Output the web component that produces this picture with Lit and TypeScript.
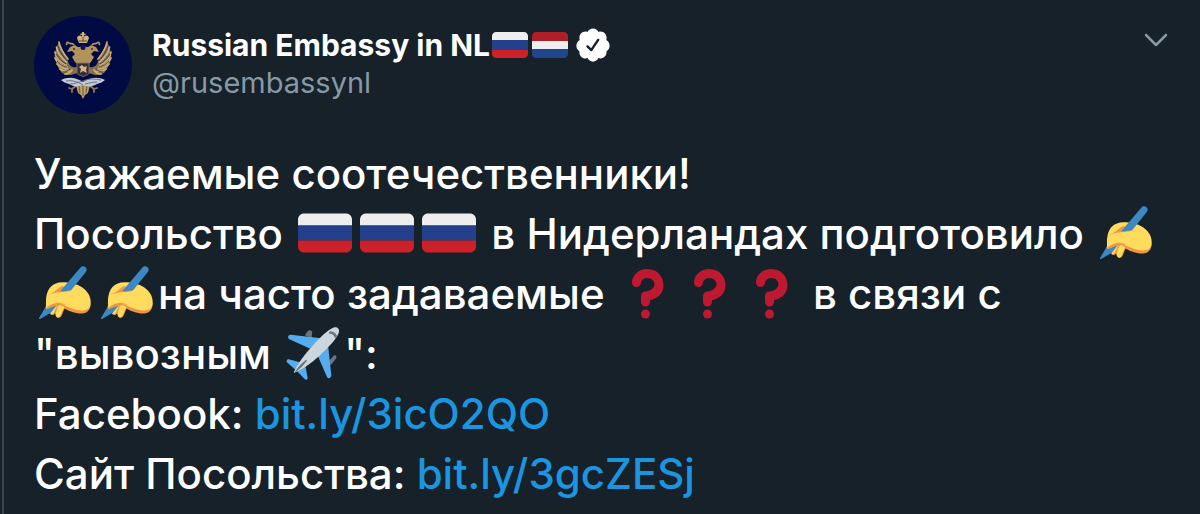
import { LitElement, html, svg, css } from "lit";
import { customElement, property } from "lit/decorators.js";

const shapes: Record<string, { label: string; art: unknown }> = {
  ru: {
    label: "Флаг России",
    art: svg`
      <path fill="#eee" d="M32 5H4C1.800 5 0 6.800 0 9v4h36V9c0-2.200-1.800-4-4-4z"/>
      <path fill="#22408c" d="M0 13h36v10H0z"/>
      <path fill="#ce2028" d="M0 23v4c0 2.200 1.800 4 4 4h28c2.200 0 4-1.800 4-4v-4z"/>`,
  },
  nl: {
    label: "Флаг Нидерландов",
    art: svg`
      <path fill="#ae1f28" d="M32 5H4C1.800 5 0 6.800 0 9v5h36V9c0-2.200-1.800-4-4-4z"/>
      <path fill="#eee" d="M0 14h36v8H0z"/>
      <path fill="#20478b" d="M0 22v5c0 2.200 1.800 4 4 4h28c2.200 0 4-1.800 4-4v-5z"/>`,
  },
  question: {
    label: "Вопрос",
    art: svg`
      <path fill="#be1931" d="M17 27c-1.657 0-3-1.343-3-3v-4c0-1.657 1.343-3 3-3 .603-.006 6-1 6-5 0-2-2-4-5-4-2.441 0-4 2-4 3 0 1.657-1.343 3-3 3s-3-1.343-3-3c0-4.878 4.580-9 10-9 8 0 11 5.982 11 11 0 4.145-2.277 7.313-6.413 8.920-.9.351-1.790.587-2.587.747V24c0 1.657-1.343 3-3 3z"/>
      <circle fill="#be1931" cx="17" cy="32" r="3"/>`,
  },
  writing: {
    label: "Пишущая рука",
    art: svg`
      <path fill="#ef9645" d="M16 27.500c5 3 10.500 4.800 14.500 4 3.200-.7 5-3.500 4.400-7L20 21z"/>
      <path fill="#ef9645" d="M7.500 26c-.5 4 .3 6.500 2 6.700.8 0 1.500-.4 1.900-1 .2 1.800 1 2.900 2.300 2.900 2.300 0 2.500-3.500 4.100-6.200l2-3.400-6-3z"/>
      <path fill="#ffdc5d" d="M8.200 27.500c-.4 2.600-.1 4.600 1 4.700 1.700.1 2-4 4.200-6.700l-2.500-1.500zM12.300 29.600c-.7 2.500-.4 4.500 1.100 4.700 2 .2 2.200-4 4.200-6.900l-3-1.600c-1.200 1-1.900 2.200-2.300 3.800z"/>
      <path fill="#3b88c3" d="M5.600 26.400.7 34.700c-.2.400.2.900.7.700l7.200-4.300 4.600-6z"/>
      <path fill="#ffdc5d" d="M5.300 23.700c.2-4.500 1.100-7.500 3.200-9.800 2.300-2.400 5.500-3.400 9.500-3 5 .3 9.500 1.600 13 4.600 3 2.600 4.400 6 4.100 9.500-.4 3.500-2.900 4.900-6.400 4.600-4.400-.3-7.800-1.800-11.200-3.400-1.600-.8-3.700-.9-5.500-.2l-5.400 2.400c-1.100.4-1.700-.4-1.300-1.600z"/>
      <path fill="#ef9645" d="M7.500 18.900c2.400-1 4.300-2.200 6.200-4l2.200-1.600 5 1.800 1.600 1.300c-5.400 1.900-10.200.1-15.800 3.100z"/>
      <path fill="#ef9645" d="M5.500 27.600c2.500-1.500 5-3 8-3.100 2 0 3.700.7 5 1.600-3.400-.9-6.300.1-9 1.300-1.800.8-3.400 1.300-4 .2z"/>
      <path fill="#3b88c3" d="M28.200 1.100c.9-1.100 2.300-1.300 3.300-.5 1.100.8 1.300 2.100.5 3.300l-9.600 12c-2 .7-4.700 1.100-7.600 1z"/>`,
  },
  plane: {
    label: "Самолёт",
    art: svg`
      <path fill="#66757f" d="m12.500 6.200 2-2.800c1-.9 2.500-.6 3 .6l-.5 4zM28.700 23.200l3.200-3.500c1.300-.8 2.200.5 1.500 2l-3.600 4.400z"/>
      <path fill="#55acee" d="M23.500 8.200 3.200 5.900C1.500 5.900.9 7.500 1.900 8.600L15.800 15zM28 12.500l2.200 20.200c0 2-1.700 2.800-2.800 1.500L20.800 19z"/>
      <path fill="#55acee" d="M9.800 24.400 1.900 22.200c-1.200-.2-2 1.200-1.100 2.200l6.800 6 4.800 5c1 1 2.200.4 2-1l-1.500-8z"/>
      <path fill="#ccd6dd" d="M5.300 30.500C8 25 12 19.500 17.200 13.700 22.500 7.700 28 2.600 31.500 1.200c2.600-1.100 4.700.8 3.600 3.700C33.500 8.800 28.500 14.200 22.500 19.600 16.800 24.700 11.300 28.800 5.300 31.300z"/>
      <path fill="#66757f" d="M5.500 31.200c2-3.400 4.700-6.300 7.700-8.600.6-.3 1 .1.600.7-2.200 3-5 5.800-8.300 7.900zM29.800 3.500c2 .1 3.700 1.400 4.200 3.200l-1.300 1.600c-.2-1.900-1.900-3.300-3.900-3.200-.5-.7.300-1.600 1-1.600z"/>`,
  },
};

@customElement("inline-emoji")
class InlineEmoji extends LitElement {
  static styles = css`
    :host {
      display: inline-block;
      width: 54px;
      height: 54px;
      margin: 0 4px;
      vertical-align: -11px;
      line-height: 0;
    }
    :host([small]) {
      width: 36px;
      height: 36px;
      margin: 0 2px;
    }
    .glyph {
      display: block;
      width: 100%;
      height: 100%;
      overflow: visible;
    }
  `;

  @property() name = "ru";

  render() {
    const shape = shapes[this.name];
    return html`<svg class="glyph" viewBox="0 0 36 36" role="img" aria-label=${shape.label}>${shape.art}</svg>`;
  }
}

@customElement("embassy-avatar")
class EmbassyAvatar extends LitElement {
  static styles = css`
    :host {
      display: block;
      flex: none;
      width: 98px;
      height: 98px;
    }
    .disc {
      display: block;
      width: 100%;
      height: 100%;
    }
  `;

  render() {
    const wing = svg`
      <path fill="#84704f" d="M44 51C38 52 35 50 34 45l-9-19c-3 6-5 12-4 17l2 6 2 4 3 4 4 2 5 0 6-2z"/>
      <g fill="none" stroke="#cdb07a" stroke-width="1.700" stroke-linecap="round">
        <path d="M25 26c1 7 5 12 9 17"/>
        <path d="M22.500 31c1 6 5 11 10 15"/>
        <path d="M21 36c1 6 5 10 11 13"/>
        <path d="M21 42c2 4 6 8 12 9"/>
        <path d="M23 48c3 3 6 5 11 5"/>
        <path d="M26 53c3 2 6 3 9 2"/>
        <path d="M31 58c3 0 5-1 7-4"/>
      </g>
      <path fill="none" stroke="#3e3440" stroke-width=".9" d="M24 30c2 7 6 11 9 15M22 38c3 5 6 8 10 10M23 45c3 4 6 5 10 6M29 56c3 0 5-1 7-3"/>
      <path fill="#b3935c" d="M47 51 41 46l-3-5 3-3-3-3-5 1 3-5 5-2 4 3 1 5z"/>
      <path fill="none" stroke="#b6975d" stroke-width="1.700" d="M40 29c-2-3-3 0-5-2s-3 1-2 2"/>
      <circle cx="40" cy="33" r=".9" fill="#29264a"/>
      <path fill="none" stroke="#8f7955" stroke-width="1.800" stroke-linecap="round" d="m43 69-5 4m0 0-3-1m3 1v3"/>`;
    return html`
      <svg class="disc" viewBox="0 0 98 98" role="img" aria-label="Russian Embassy in NL">
        <circle cx="49" cy="49" r="49" fill="#010a43"/>
        <g>${wing}</g>
        <g transform="matrix(-1 0 0 1 98 0)">${wing}</g>
        <path fill="#d0b17a" d="M43 22c1-3 4-3 5-1v-2h-1.500v-1.500H48V16h2v1.500h1.500V19H50v2c1-2 4-2 5 1l-2 5h-8z"/>
        <path stroke="#4f4239" stroke-width=".9" fill="none" d="M45 25h8M49 21v4"/>
        <path fill="#b3935c" d="M42 31h4l3-2 3 2h4l-3 7v9h-8v-9z"/>
        <circle cx="49" cy="31.500" r="2.500" fill="#141746"/>
        <path fill="#352b43" stroke="#8a734f" stroke-width="1" d="M43 47h12v10c0 2-4 2-6 4-2-2-6-2-6-4z"/>
        <path fill="#d4b57d" d="m46 57 1-4-2-2 3-2 2 2 3-1-1 4 1 3-2-1-2-1z"/>
        <path fill="#bd9e65" d="M42 69h14l-2 8-3 2-2 4-2-4-3-2z"/>
        <path stroke="#554839" stroke-width=".8" d="M45 70l1 7M49 70v10M53 70l-1 7"/>
        <path fill="#c3cad6" d="M27 64c8-4 16-2 22 2 6-4 14-6 22-2-2 2-5 3-8 4-5 3-9 3-14 1-5 2-9 2-14-1-3-1-6-2-8-4z"/>
        <path fill="none" stroke="#68738b" stroke-width="1" d="M32 65c7-1 12 1 17 4m-13-1c5 0 8-2 13-3 7-3 12-2 18-1m-16 4c5-1 8-2 12-2"/>
      </svg>`;
  }
}

@customElement("app-root")
class AppRoot extends LitElement {
  static styles = css`
    :host {
      display: block;
      min-height: 100vh;
      box-sizing: border-box;
      padding-left: 2px;
      background: #16212a;
      color: #fff;
      font-family: Inter, "Liberation Sans", sans-serif;
    }
    .tweet {
      box-sizing: border-box;
      min-height: 100vh;
      border-left: 2px solid #38444d;
      padding: 16px 32px 0 30px;
    }
    .header {
      display: flex;
      align-items: flex-start;
      gap: 20px;
    }
    .author {
      flex: 1;
      min-width: 0;
      padding-top: 10px;
      font-size: 29px;
      line-height: 38px;
    }
    .name-row {
      display: flex;
      align-items: center;
    }
    .name {
      font-size: 30px;
      font-weight: 700;
    }
    .badge {
      width: 38px;
      height: 38px;
      margin-left: 4px;
      fill: #fff;
    }
    .handle {
      color: #8899a6;
      text-decoration: none;
    }
    .more {
      display: block;
      margin-top: 14px;
      padding: 0;
      border: 0;
      background: none;
      color: #8899a6;
    }
    .chevron {
      display: block;
      width: 24px;
      height: 20px;
    }
    .body {
      margin: 30px 0 0;
      font-size: 42px;
      font-weight: 500;
      line-height: 60px;
    }
    .link {
      color: #1b95e0;
      text-decoration: none;
    }
  `;

  private emoji(name: string) {
    return html`<inline-emoji name=${name}></inline-emoji>`;
  }

  private triple(name: string) {
    return [0, 1, 2].map(() => this.emoji(name));
  }

  render() {
    return html`
      <article class="tweet">
        <header class="header">
          <embassy-avatar></embassy-avatar>
          <div class="author">
            <div class="name-row">
              <span class="name">Russian Embassy in NL</span>
              <inline-emoji small name="ru"></inline-emoji>
              <inline-emoji small name="nl"></inline-emoji>
              <svg class="badge" viewBox="0 0 24 24" role="img" aria-label="Verified account">
                <path d="M22.500 12.500c0-1.580-.875-2.950-2.148-3.600.154-.435.238-.905.238-1.400 0-2.210-1.710-3.998-3.818-3.998-.47 0-.92.084-1.336.25C14.818 2.415 13.510 1.500 12 1.500s-2.816.917-3.437 2.250c-.415-.165-.866-.25-1.336-.25-2.110 0-3.818 1.790-3.818 4 0 .494.083.964.237 1.400-1.272.65-2.147 2.018-2.147 3.600 0 1.495.782 2.798 1.942 3.486-.02.17-.032.34-.032.514 0 2.210 1.708 4 3.818 4 .47 0 .92-.086 1.335-.25.62 1.334 1.926 2.250 3.437 2.250 1.512 0 2.818-.916 3.437-2.250.415.163.865.248 1.336.248 2.110 0 3.818-1.790 3.818-4 0-.174-.012-.344-.033-.513 1.158-.687 1.943-1.990 1.943-3.484zm-6.616-3.334l-4.334 6.500c-.145.217-.382.334-.625.334-.143 0-.288-.04-.416-.126l-.115-.094-2.415-2.415c-.293-.293-.293-.768 0-1.060s.768-.294 1.060 0l1.770 1.767 3.825-5.740c.23-.345.696-.436 1.040-.207.346.23.44.696.21 1.040z"/>
              </svg>
            </div>
            <a class="handle" href="#rusembassynl">@rusembassynl</a>
          </div>
          <button class="more" type="button" aria-label="More">
            <svg class="chevron" viewBox="0 0 24 20" fill="none" stroke="currentColor" stroke-width="2.500" stroke-linecap="round" stroke-linejoin="round">
              <path d="m2 5 10 10 10-10"/>
            </svg>
          </button>
        </header>
        <p class="body">
          Уважаемые соотечественники!<br>
          Посольство ${this.triple("ru")} в Нидерландах подготовило ${this.triple("writing")}на часто задаваемые ${this.triple("question")} в связи с "вывозным ${this.emoji("plane")}":<br>
          Facebook: <a class="link" href="#3icO2QO">bit.ly/3icO2QO</a><br>
          Сайт Посольства: <a class="link" href="#3gcZESj">bit.ly/3gcZESj</a>
        </p>
      </article>`;
  }
}
